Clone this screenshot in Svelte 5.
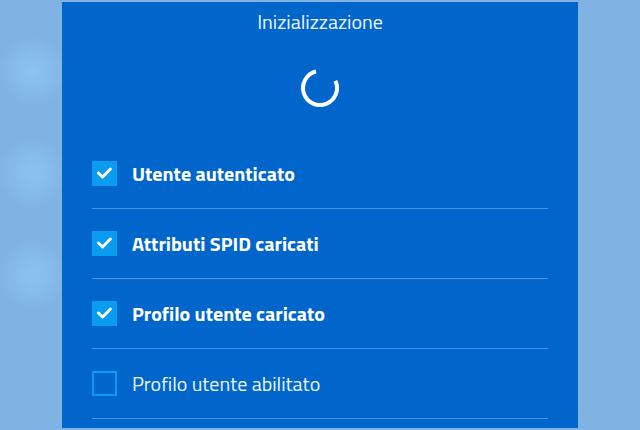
<script>
  let steps = [
    { id: 'auth', label: 'Utente autenticato', done: true },
    { id: 'spid', label: 'Attributi SPID caricati', done: true },
    { id: 'profile', label: 'Profilo utente caricato', done: true },
    { id: 'enabled', label: 'Profilo utente abilitato', done: false }
  ];
</script>

<main class="page">
  <section class="panel">
    <h1>Inizializzazione</h1>

    <svg class="spinner" viewBox="0 0 38 38" role="status" aria-label="Inizializzazione">
      <path d="M34.4 11.8 A17 17 0 1 1 15 2.5" />
    </svg>

    <ul class="steps">
      {#each steps as step (step.id)}
        <li>
          <label class:done={step.done} for={step.id}>
            <span class="check">
              <input type="checkbox" id={step.id} bind:checked={step.done} />
              {#if step.done}
                <svg viewBox="0 0 25 25" aria-hidden="true">
                  <path d="M6.4 12 L10.6 16 L18.4 8" />
                </svg>
              {/if}
            </span>
            <span class="text">{step.label}</span>
          </label>
        </li>
      {/each}
    </ul>
  </section>
</main>

<style>
  :global(body) {
    margin: 0;
  }

  .page {
    box-sizing: border-box;
    display: flex;
    min-height: 100vh;
    padding: 2px 62px;
    background:
      radial-gradient(circle at 33px 71px, #88c3f0 0, rgba(136, 195, 240, 0.7) 14px, rgba(136, 195, 240, 0) 36px),
      radial-gradient(circle at 33px 173px, #88c3f0 0, rgba(136, 195, 240, 0.7) 14px, rgba(136, 195, 240, 0) 36px),
      radial-gradient(circle at 33px 275px, #88c3f0 0, rgba(136, 195, 240, 0.7) 14px, rgba(136, 195, 240, 0) 36px),
      #80b2e4;
    font-family: 'Titillium Web', Roboto, 'Open Sans', sans-serif;
  }

  .panel {
    box-sizing: border-box;
    display: flex;
    flex: 1;
    flex-direction: column;
    align-items: center;
    padding: 8px 30px 0;
    background: #0066cc;
    color: #fff;
  }

  h1 {
    margin: 0;
    font-size: 20px;
    font-weight: 400;
    line-height: 24px;
    color: #ecf5ff;
  }

  .spinner {
    width: 38px;
    height: 38px;
    margin: 35px 0 32px;
  }

  .spinner path {
    fill: none;
    stroke: #fff;
    stroke-width: 4;
  }

  .steps {
    width: 100%;
    margin: 0;
    padding: 0;
    list-style: none;
  }

  li {
    border-bottom: 1px solid #4a92e4;
  }

  label {
    display: flex;
    align-items: center;
    gap: 15px;
    padding: 22px 0;
    font-size: 20px;
    line-height: 25px;
    color: #ecf5ff;
    cursor: pointer;
  }

  label.done {
    font-weight: 700;
    color: #fff;
  }

  .check {
    display: grid;
    width: 25px;
    height: 25px;
  }

  .check input,
  .check svg {
    grid-area: 1 / 1;
    width: 25px;
    height: 25px;
  }

  .check input {
    box-sizing: border-box;
    margin: 0;
    border: 2px solid #0a9cee;
    appearance: none;
    cursor: pointer;
  }

  .check input:checked {
    background: #0a9cee;
  }

  .check svg {
    pointer-events: none;
  }

  .check path {
    fill: none;
    stroke: #fff;
    stroke-width: 3;
    stroke-linecap: round;
    stroke-linejoin: round;
  }
</style>
